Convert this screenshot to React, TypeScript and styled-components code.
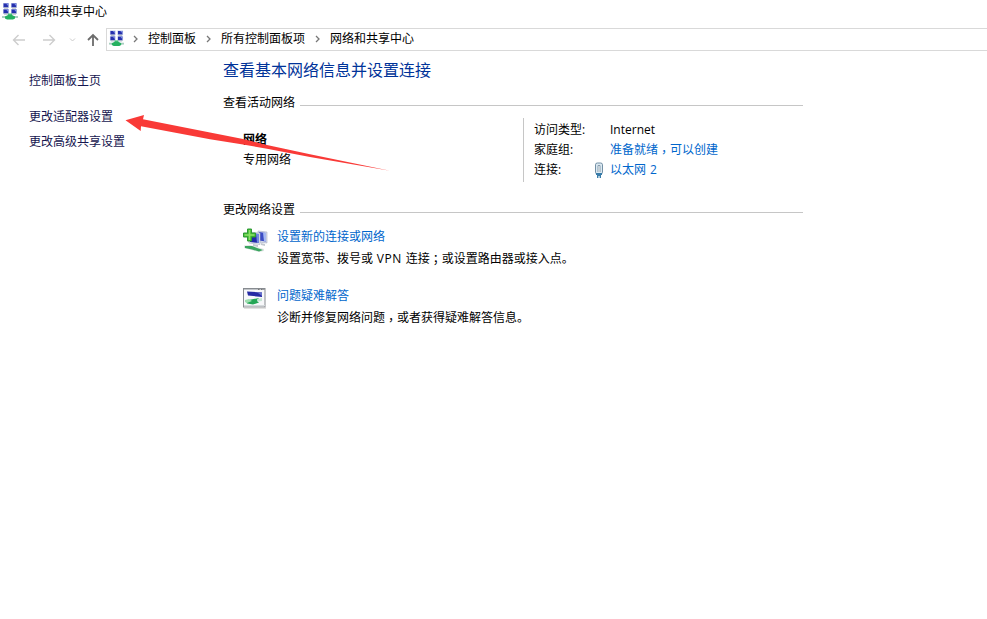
import React from "react";
import styled, { createGlobalStyle } from "styled-components";

const GlobalStyle = createGlobalStyle`
  * { box-sizing: border-box; }
  body {
    margin: 0;
    background: #fff;
    color: #000;
    font-family: "Open Sans", "Noto Sans CJK SC", sans-serif;
    font-size: 12px;
    line-height: 20px;
  }
`;

const Window = styled.div`
  position: relative;
  height: 619px;
  overflow: hidden;
  background: #fff;
  white-space: nowrap;
`;

const TitleBar = styled.header`
  display: flex;
  align-items: center;
  gap: 5px;
  height: 24px;
  padding: 0 0 1px 2px;
`;

const NavBar = styled.nav`
  display: flex;
  align-items: center;
  height: 31px;
  padding: 0 0 0 12px;
`;

const NavButton = styled.button<{ $gap: number }>`
  display: flex;
  padding: 0;
  margin: 0 ${(p) => p.$gap}px 0 0;
  border: 0;
  background: none;
`;

const AddressBar = styled.div`
  display: flex;
  flex: 1;
  align-items: center;
  height: 23px;
  padding: 0 0 2px 2px;
  border: 1px solid #d9d9d9;
  border-right: 0;
`;

const Chevron = styled.svg`
  margin: 1px 9px 0 9px;

  &:first-of-type {
    margin-left: 8px;
  }
`;

const Crumb = styled.span``;

const CrumbIcon = styled.span`
  display: flex;
  width: 15px;
`;

const Body = styled.div`
  display: flex;
`;

const Sidebar = styled.aside`
  display: flex;
  flex-direction: column;
  width: 223px;
  padding: 16px 0 0 29px;
`;

const SideLink = styled.a<{ $after?: number }>`
  height: 20px;
  margin-bottom: ${(p) => p.$after ?? 0}px;
  color: #15154f;
`;

const Main = styled.main`
  width: 580px;
  padding-top: 3px;
`;

const Heading = styled.h1`
  margin: 0;
  height: 24px;
  font-size: 16px;
  line-height: 24px;
  font-weight: 400;
  color: #003399;
`;

const SectionTitle = styled.h2`
  display: flex;
  align-items: center;
  gap: 5px;
  height: 20px;
  margin: 0;
  font-size: 12px;
  font-weight: 400;

  &::after {
    content: "";
    flex: 1;
    height: 1px;
    margin-top: 4px;
    background: #c6c6c6;
  }
`;

const ActiveNetworks = styled.section`
  margin-top: 11px;
`;

const NetworkRow = styled.div`
  display: flex;
  height: 64px;
  margin-top: 5px;
`;

const NetworkName = styled.div`
  display: flex;
  flex-direction: column;
  width: 300px;
  padding: 12px 0 0 20px;
`;

const Strong = styled.strong`
  font-weight: 700;
`;

const Details = styled.dl`
  display: grid;
  grid-template-columns: 60px 16px auto;
  grid-auto-rows: 20px;
  align-content: start;
  margin: 0;
  padding: 2px 0 0 10px;
  border-left: 1px solid #c6c6c6;
`;

const Term = styled.dt`
  grid-column: 1;
`;

const PlugCell = styled.span`
  grid-column: 2;
  display: flex;
  align-items: center;
`;

const Value = styled.dd`
  grid-column: 3;
  margin: 0;
  word-spacing: 1px;
`;

const Link = styled.a`
  color: #0066cc;
`;

const Centered = styled.span<{ $drop: number }>`
  font-family: "Noto Sans CJK TC", sans-serif;
  line-height: 0;
  vertical-align: -${(p) => p.$drop}px;
`;

const Latin = styled.span`
  letter-spacing: 0.6px;
`;

const Settings = styled.section`
  margin-top: 18px;
`;

const Task = styled.article`
  display: flex;
  height: 59px;
  padding: 7px 0 0 20px;
`;

const TaskIcon = styled.div<{ $top: number }>`
  width: 34px;
  padding-top: ${(p) => p.$top}px;
`;

const TaskText = styled.div`
  display: flex;
  flex-direction: column;
  gap: 2px;
`;

const Arrow = styled.svg`
  position: absolute;
  left: 124px;
  top: 110px;
  pointer-events: none;
`;

const NetworkCenterIcon = () => (
  <svg width="16" height="17" viewBox="0 0 16 17">
    {[[1, 0], [9, 0], [1, 6], [9, 6]].map(([x, y]) => (
      <g key={`${x}-${y}`}>
        <rect x={x} y={y} width="6" height="5" fill="#b9c3e6" />
        <rect x={x + 0.6} y={y + 0.5} width="4.6" height="3.6" fill="#2630ad" />
        <path d={`M${x + 3} ${y + 0.5}h2.2v2.4z`} fill="#7f91e6" />
        <path d={`M${x + 1} ${y + 5}h4`} stroke="#9ba5b5" />
      </g>
    ))}
    <path d="M6 10.5h4v3H6z" fill="#45bd78" />
    <path d="M0 13h16v2H0z" fill="#a9cfc0" />
    <path d="M3 13.500l3-1.500h4l3 1.500v2l-2 1H5l-2-1z" fill="#25b060" />
  </svg>
);

const ArrowIcon = ({ d, color, width = 1.4 }: { d: string; color: string; width?: number }) => (
  <svg width="14" height="14" viewBox="0 0 14 14" fill="none" stroke={color} strokeWidth={width}>
    <path d={d} />
  </svg>
);

const Separator = () => (
  <Chevron width="7" height="8" viewBox="0 0 7 8" fill="none" stroke="#777" strokeWidth="1.3">
    <path d="M2 1l3 3-3 3" />
  </Chevron>
);

const PlugIcon = () => (
  <svg width="10" height="17" viewBox="0 0 10 17">
    <rect x="1.5" y="1" width="7" height="11" rx="1.8" fill="#dce9f2" stroke="#7390a5" />
    <path d="M4 10V3.5h2V10" fill="#fff" stroke="#7c94a5" strokeWidth=".9" />
    <path d="M2 11h6v2H7v3H5.6v-2H4.4v2H3v-3H2z" fill="#397ca9" />
  </svg>
);

const NewConnectionIcon = () => (
  <svg width="25" height="26" viewBox="0 0 25 26">
    <path d="M15 3l9 1v11l-9-1z" fill="#d3d8e8" stroke="#a7afc4" strokeWidth=".6" />
    <path d="M16 4l7 1v8.5l-7-1z" fill="#3b4cc4" />
    <path d="M20 4.6l3 .4v8.5l-2-.3z" fill="#a6b8f2" />
    <path d="M5 4l12 1v11.5L6 15z" fill="#e4e8f0" stroke="#a7afc4" strokeWidth=".6" />
    <path d="M7 5l9 1v9l-9-1z" fill="#2029a8" />
    <path d="M13 5.7l3 .3v9l-2-.3z" fill="#6f86e0" />
    <path d="M10 16l5 1v2l-5-1zM18 15l4 1v2l-4-1z" fill="#c3c8d0" />
    <path d="M1 17.5l6-.5 14 4v2l-5 1L1 20z" fill="#e0e5e4" />
    <path d="M2 18h7l5 2 6 2-4 1.5-7-2-7-1.5z" fill="#3aa55f" />
    <path d="M4.5 1h4v4h4v4h-4v4h-4V9h-4V5h4z" fill="#40ba35" stroke="#2f9a35" />
    <path d="M6.5 2v10M1.5 7h10" stroke="#8de267" strokeWidth="1.6" />
  </svg>
);

const TroubleshootIcon = () => (
  <svg width="23" height="21" viewBox="0 0 23 21">
    <rect x=".5" y=".5" width="21.5" height="18.5" fill="#f7f8fa" stroke="#878b90" />
    <path d="M1 1.5h21" stroke="#c1c5c9" />
    <path d="M15 1.5h1.5M18 1.5h1.5M20.5 1.5h1" stroke="#777" />
    <path d="M4 3.5l15 1V9L5 7.5z" fill="#252aa4" />
    <path d="M14 4.2l5 .3v3.500z" fill="#6670c9" />
    <path d="M3 12.500l5-1 8-1.500-2 3 2 1.500-6 2-6-1z" fill="#24a656" />
    <path d="M2 12l4-1 3 2-5 2-2-1z" fill="#9edeb0" />
    <path d="M14 11l5-1v3l-4 .5z" fill="#c5e5d3" />
    <path d="M1 17.5h21" stroke="#d5dadc" />
    <path d="M1 20h22" stroke="#c6c6c6" />
  </svg>
);

export default function App() {
  return (
    <>
      <GlobalStyle />
      <Window>
        <TitleBar>
          <NetworkCenterIcon />
          <span>网络和共享中心</span>
        </TitleBar>
        <NavBar>
          <NavButton $gap={16} aria-label="后退">
            <ArrowIcon color="#cdcdcd" d="M13 7H2M6.5 2L1.5 7l5 5" />
          </NavButton>
          <NavButton $gap={13} aria-label="前进">
            <ArrowIcon color="#cdcdcd" d="M1 7h11M7.5 2l5 5-5 5" />
          </NavButton>
          <NavButton $gap={10} aria-label="最近">
            <svg width="7" height="6" viewBox="0 0 7 6" fill="none" stroke="#ccc">
              <path d="M1 1.5L3.5 4 6 1.5" />
            </svg>
          </NavButton>
          <NavButton $gap={6} aria-label="向上">
            <ArrowIcon color="#6c6c6c" width={1.8} d="M7 13V2M2 7l5-5 5 5" />
          </NavButton>
          <AddressBar>
            <CrumbIcon><NetworkCenterIcon /></CrumbIcon>
            <Separator />
            <Crumb>控制面板</Crumb>
            <Separator />
            <Crumb>所有控制面板项</Crumb>
            <Separator />
            <Crumb>网络和共享中心</Crumb>
          </AddressBar>
        </NavBar>
        <Body>
          <Sidebar>
            <SideLink $after={16}>控制面板主页</SideLink>
            <SideLink $after={5}>更改适配器设置</SideLink>
            <SideLink>更改高级共享设置</SideLink>
          </Sidebar>
          <Main>
            <Heading>查看基本网络信息并设置连接</Heading>
            <ActiveNetworks>
              <SectionTitle>查看活动网络</SectionTitle>
              <NetworkRow>
                <NetworkName>
                  <Strong>网络</Strong>
                  <span>专用网络</span>
                </NetworkName>
                <Details>
                  <Term>访问类型:</Term>
                  <Value>Internet</Value>
                  <Term>家庭组:</Term>
                  <Value>
                    <Link>准备就绪<Centered $drop={3}>，</Centered>可以创建</Link>
                  </Value>
                  <Term>连接:</Term>
                  <PlugCell><PlugIcon /></PlugCell>
                  <Value><Link>以太网 2</Link></Value>
                </Details>
              </NetworkRow>
            </ActiveNetworks>
            <Settings>
              <SectionTitle>更改网络设置</SectionTitle>
              <Task>
                <TaskIcon $top={1}><NewConnectionIcon /></TaskIcon>
                <TaskText>
                  <Link>设置新的连接或网络</Link>
                  <span>设置宽带、拨号或<Latin> VPN </Latin>连接<Centered $drop={1}>；</Centered>或设置路由器或接入点。</span>
                </TaskText>
              </Task>
              <Task>
                <TaskIcon $top={2}><TroubleshootIcon /></TaskIcon>
                <TaskText>
                  <Link>问题疑难解答</Link>
                  <span>诊断并修复网络问题<Centered $drop={3}>，</Centered>或者获得疑难解答信息。</span>
                </TaskText>
              </Task>
            </Settings>
          </Main>
        </Body>
        <Arrow width="268" height="64" viewBox="0 0 268 64">
          <path
            d="M1.5 10.3L20 5l-1 4.300L86 22.500l33 6.500 24 6 43 9.300 80 16.400-80-13.700-43-8.300-24-4.200-33-5.200L17 16.300l-.3 4.700z"
            fill="#f93a37"
          />
        </Arrow>
      </Window>
    </>
  );
}
